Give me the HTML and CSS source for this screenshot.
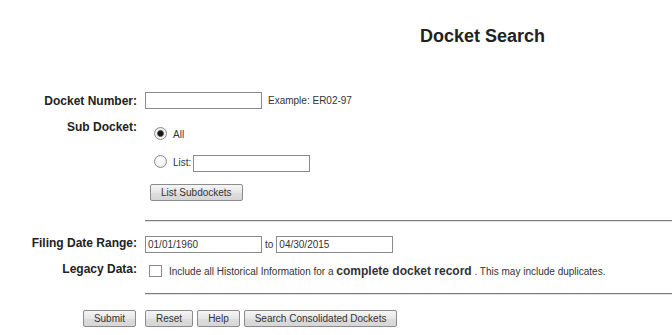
FILE: index.html
```html
<!DOCTYPE html>
<html lang="en">
<head>
<meta charset="utf-8">
<title>Docket Search</title>
<link rel="stylesheet" href="styles.css">
</head>
<body>
<div class="page">
  <h1 class="title">Docket Search</h1>
  <form class="form">
    <div class="row row-docket">
      <label class="label label-docket" for="docket">Docket Number:</label>
      <div class="field field-inline">
        <input class="text" id="docket" type="text">
        <span class="hint">Example: ER02-97</span>
      </div>
    </div>

    <div class="row row-sub">
      <div class="label label-sub">Sub Docket:</div>
      <div class="field field-sub">
        <div class="opt opt-all">
          <input class="radio" type="radio" name="sub" id="sub-all" checked>
          <label class="opt-text" for="sub-all">All</label>
        </div>
        <div class="opt opt-list">
          <input class="radio" type="radio" name="sub" id="sub-list">
          <label class="opt-text" for="sub-list">List:</label>
          <input class="text text-list" type="text">
        </div>
        <div class="opt opt-btn">
          <button class="btn" type="button">List Subdockets</button>
        </div>
      </div>
    </div>

    <hr class="rule rule-1">

    <div class="row row-date">
      <label class="label label-date" for="from">Filing Date Range:</label>
      <div class="field field-inline">
        <input class="text" id="from" type="text" value="01/01/1960">
        <span class="to">to</span>
        <input class="text" type="text" value="04/30/2015">
      </div>
    </div>

    <div class="row row-legacy">
      <div class="label label-legacy">Legacy Data:</div>
      <div class="field field-legacy">
        <input class="check" type="checkbox" id="legacy">
        <span class="legacy-text">Include all Historical Information for a <b class="strong">complete docket record</b> . This may include duplicates.</span>
      </div>
    </div>

    <hr class="rule rule-2">

    <div class="row row-actions">
      <div class="label-btn">
        <button class="btn btn-submit" type="submit">Submit</button>
      </div>
      <div class="actions">
        <button class="btn" type="reset">Reset</button>
        <button class="btn" type="button">Help</button>
        <button class="btn" type="button">Search Consolidated Dockets</button>
      </div>
    </div>
  </form>
</div>
</body>
</html>
```

FILE: styles.css
```css
html, body {
  margin: 0;
  padding: 0;
  background: #ffffff;
  overflow: hidden;
}

body {
  font-family: "Liberation Sans", Arial, sans-serif;
  color: #222222;
}

.page {
  width: 965px;
}

.title {
  margin: 26px 0 0;
  font-size: 18px;
  line-height: 21px;
  font-weight: bold;
  text-align: center;
  color: #222222;
}

.form {
  margin: 0;
}

.row {
  display: grid;
  grid-template-columns: 137px 1fr;
  column-gap: 8px;
  align-items: start;
}

.label {
  text-align: right;
  font-size: 12px;
  font-weight: bold;
  color: #222222;
  line-height: 14px;
}

.field {
  font-size: 10px;
  color: #333333;
}

.field-inline {
  display: flex;
  align-items: center;
}

.text {
  box-sizing: border-box;
  width: 117px;
  height: 17px;
  margin: 0;
  padding: 0 2px;
  border: 1px solid #8a8a8a;
  border-radius: 0;
  background: #ffffff;
  font-family: "Liberation Sans", Arial, sans-serif;
  font-size: 10px;
  color: #333333;
  outline: none;
}

/* Docket number */
.row-docket {
  margin-top: 45px;
}

.label-docket {
  line-height: 19px;
}

.hint {
  margin-left: 6px;
  font-size: 10px;
  color: #333333;
}

/* Sub docket */
.row-sub {
  margin-top: 7px;
}

.label-sub {
  padding-top: 2px;
}

.field-sub {
  padding-left: 4px;
}

.opt {
  display: flex;
  align-items: flex-start;
}

.opt-all {
  margin-top: 9px;
}

.opt-list {
  margin-top: 14px;
}

.opt-btn {
  margin-top: 12px;
  padding-left: 1px;
}

.radio {
  -webkit-appearance: none;
  appearance: none;
  box-sizing: border-box;
  width: 13px;
  height: 13px;
  margin: 0 0 0 5px;
  border: 1px solid #8a8a8a;
  border-radius: 50%;
  background: radial-gradient(circle at 50% 40%, #ffffff 0%, #f1f1f1 60%, #dcdcdc 100%);
  flex: none;
}

.radio:checked {
  background: radial-gradient(circle at 50% 50%, #111111 0, #1a1a1a 2.4px, #7a7a7a 3.2px, #f4f4f4 3.8px, #e8e8e8 100%);
}

.opt-text {
  margin: 2px 0 0 6px;
  font-size: 10px;
  line-height: 12px;
  color: #333333;
}

.text-list {
  margin-left: 2px;
}

/* Buttons */
.btn {
  box-sizing: border-box;
  height: 17px;
  margin: 0;
  padding: 0 10px;
  border: 1px solid #8c8c8c;
  border-radius: 2px;
  background: linear-gradient(#f5f5f5, #e6e6e6 50%, #dddddd 51%, #d6d6d6);
  font-family: "Liberation Sans", Arial, sans-serif;
  font-size: 10px;
  line-height: 15px;
  color: #333333;
  cursor: pointer;
}

/* Rules */
.rule {
  margin: 19px 0 0 145px;
  height: 0;
  border: 0;
  border-top: 1px solid #7d7d7d;
  border-bottom: 1px solid #e2e2e2;
}

.rule-2 {
  margin-top: 14px;
}

/* Dates */
.row-date {
  margin-top: 14px;
}

.label-date {
  line-height: 15px;
}

.to {
  margin: 0 3px;
  font-size: 10px;
  color: #333333;
}

/* Legacy */
.row-legacy {
  margin-top: 9px;
}

.field-legacy {
  display: flex;
  align-items: flex-start;
}

.check {
  -webkit-appearance: none;
  appearance: none;
  box-sizing: border-box;
  width: 13px;
  height: 12px;
  margin: 3px 0 0 4px;
  border: 1px solid #8a8a8a;
  border-radius: 0;
  background: #ffffff;
  flex: none;
}

.legacy-text {
  margin: 2px 0 0 7px;
  font-size: 10px;
  line-height: 14px;
  color: #333333;
  white-space: nowrap;
}

.strong {
  font-size: 12px;
  font-weight: bold;
  color: #333333;
}

/* Actions */
.row-actions {
  margin-top: 15px;
}

.label-btn {
  display: flex;
  justify-content: flex-end;
  padding-right: 1px;
}

.actions {
  display: flex;
  gap: 4px;
}
```
